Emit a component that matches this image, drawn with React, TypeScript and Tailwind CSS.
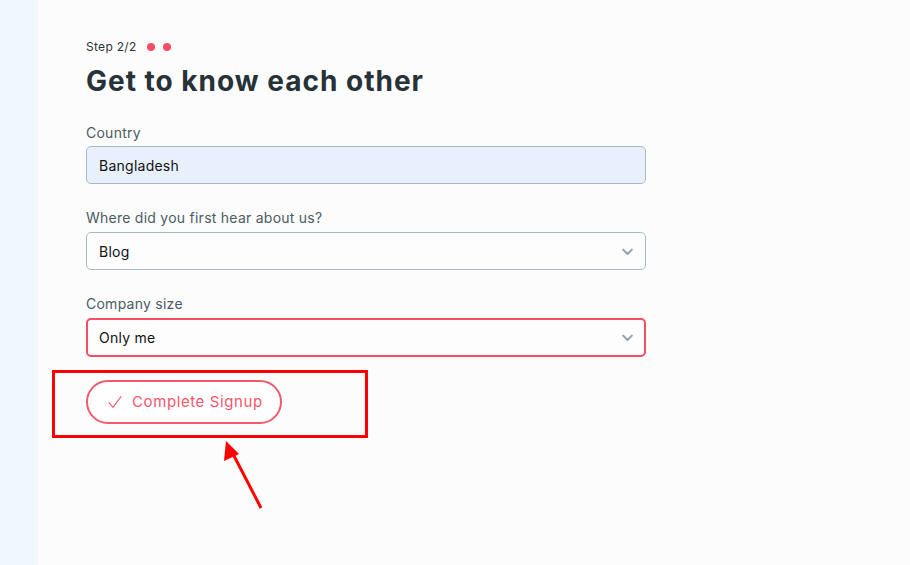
import React from "react";

function Chevron() {
  return (
    <svg width="15" height="15" viewBox="0 0 24 24" fill="none" stroke="#8fa3ab" strokeWidth="3.2" strokeLinecap="round" strokeLinejoin="round">
      <path d="M5 9l7 7 7-7" />
    </svg>
  );
}

export default function App() {
  return (
    <div className="relative flex h-[565px] w-[910px] overflow-hidden bg-[#fcfcfc]" style={{ fontFamily: "Inter, 'Noto Sans', sans-serif" }}>
      <div className="w-[38px] shrink-0 bg-[#eef8fe]" />
      <div className="flex-1 pl-[48px] pt-[38px]">
        <div className="flex items-center text-[12px] tracking-[0.3px] text-[#2b3439]">
          <span>Step 2/2</span>
          <span className="ml-[10px] h-[8px] w-[8px] rounded-full bg-[#f74d62]" />
          <span className="ml-[8px] h-[8px] w-[8px] rounded-full bg-[#f74d62]" />
        </div>
        <h1 className="mt-[7px] text-[28px] font-bold leading-[36px] tracking-[1px] text-[#263238]">Get to know each other</h1>

        <div className="mt-[25px] w-[560px]">
          <div className="text-[14px] leading-[18px] tracking-[0.25px] text-[#4b5b63]">Country</div>
          <div className="mt-[4px] flex h-[38px] items-center rounded-[5px] border border-[#a6bac3] bg-[#e8f0fe] px-[12px] text-[14px] tracking-[0.25px] text-[#111]">Bangladesh</div>

          <div className="mt-[25px] text-[14px] leading-[18px] tracking-[0.25px] text-[#4b5b63]">Where did you first hear about us?</div>
          <div className="mt-[5px] flex h-[38px] items-center justify-between rounded-[5px] border border-[#a6bac3] bg-[#fdfdfd] pl-[12px] pr-[10px] text-[14px] tracking-[0.25px] text-[#111]">
            <span>Blog</span>
            <Chevron />
          </div>

          <div className="mt-[25px] text-[14px] leading-[18px] tracking-[0.25px] text-[#4b5b63]">Company size</div>
          <div className="mt-[5px] flex h-[39px] items-center justify-between rounded-[5px] border-2 border-[#f74d62] bg-[#fdfdfd] pl-[11px] pr-[9px] text-[14px] tracking-[0.25px] text-[#111]">
            <span>Only me</span>
            <Chevron />
          </div>
        </div>

        <button className="mt-[23px] flex h-[44px] w-[196px] items-center rounded-full border-2 border-[#f5586b] bg-white pl-[19px] text-[15px] tracking-[0.6px] text-[#f5566a]">
          <svg width="16" height="16" viewBox="0 0 24 24" fill="none" stroke="#f5566a" strokeWidth="1.6" strokeLinecap="round" strokeLinejoin="round">
            <path d="M3 13l6 7L21 4" />
          </svg>
          <span className="ml-[9px]">Complete Signup</span>
        </button>
      </div>

      <div className="absolute left-[52px] top-[370px] h-[68px] w-[316px] border-[3px] border-[#ff0000]" />
      <svg className="absolute left-0 top-0" width="910" height="565" viewBox="0 0 910 565">
        <line x1="261" y1="508" x2="232" y2="452" stroke="#ff0000" strokeWidth="3" />
        <polygon points="226,441 224,461 239,454" fill="#ff0000" />
      </svg>
    </div>
  );
}
